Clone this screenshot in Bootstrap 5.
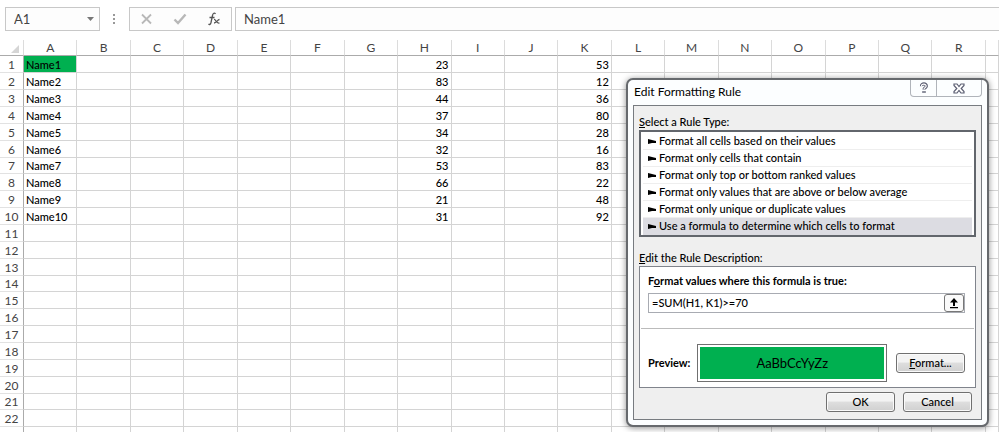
<!DOCTYPE html>
<html lang="en">
<head>
<meta charset="utf-8">
<meta name="viewport" content="width=device-width, initial-scale=1">
<title>Edit Formatting Rule</title>
<link href="https://cdn.jsdelivr.net/npm/bootstrap@5.3.0/dist/css/bootstrap.min.css" rel="stylesheet">
<style>
body{font-family:Lato,"Open Sans",sans-serif;font-size:11px;line-height:16px;color:#000;background:#fff}
button,input{font:inherit;color:inherit}
.formula-bar{padding:7px 0 0 5px}
.bar-box{height:24px;border:1px solid #c8c8c8;background:#fdfdfd;color:#444}
.name-box{width:95px}
.bar-input{border:0;background:transparent;font-size:13px;color:#444;outline:0;min-width:0}
.bar-btn{border:0;background:transparent;padding:0;display:flex}
.dots{width:29px}
.fx-box{width:103px;padding:0 10px;margin-right:3px}
.cells{table-layout:fixed;width:100%;border-collapse:separate;border-spacing:0;margin-top:9px;font-weight:500}
.cells .row-col{width:24px}
.cells .last-col{width:13px}
.cells th{font-weight:400;text-align:center;padding:0;color:#444;font-size:12px}
.cells thead th{height:16px;line-height:14px;border-right:1px solid #dcdcdc;border-bottom:1px solid #ababab}
.cells tbody th{border-right:1px solid #ababab;border-bottom:1px solid #e2e2e2}
.cells td{padding:0 2px;border-right:1px solid #d4d4d4;border-bottom:1px solid #d4d4d4}
.cells tbody tr{height:17px;line-height:15px}
.cells tbody tr:nth-child(7n){height:16px}
.cells thead th:first-child{vertical-align:bottom}
.cells .hit{background:#00b050}
.dialog-frame{top:78px;right:10px;width:363px;padding:0 5px 5px;background:#fcfeff;border:2px solid #66696d;border-radius:7px;box-shadow:0 1px 6px rgba(0,0,0,.45)}
.title-row{height:25px}
.dialog-title{font-size:12px;line-height:16px;font-weight:400;margin:4px 0 0 1px}
.caption-btns{height:17px;border:1px solid #b0b4ba;border-top:0;border-radius:0 0 4px 4px}
.caption-btns button{border:0;background:transparent;padding:0;width:44px;display:flex;align-items:center;justify-content:center}
.caption-btns .help-btn{width:26px;border-right:1px solid #b0b4ba}
.panel{background:#efefef;border:1px solid #777b80;padding:8px 5px 7px}
.section-label{display:block;line-height:16px;font-weight:500}
.rule-list{border:2px solid #62666c;background:#fff;padding:1px 2px 0;margin:0 0 13px;font-weight:500}
.rule-list button{display:flex;align-items:center;gap:3px;width:100%;height:17px;padding:0 5px;border:0;border-bottom:1px solid #eee;background:#fff;line-height:16px;text-align:left}
.rule-list .chosen{background:#dcdce2;border-color:#dcdce2}
.desc-box{border:1px solid #80848c;background:#fff;padding:6px 1px 5px;margin-bottom:4px}
.desc-inner{padding:0 9px 0 7px}
.formula-field{border:1px solid #a8abb2;height:20px;margin-top:4px}
.formula-field input{border:0;outline:0;padding:0 3px;min-width:0;font-weight:500}
.pick-btn{width:20px;margin:0;padding:0;background:#fafafa;border:1px solid #777;border-radius:3px}
.divider{margin:15px 0;border-top:1px solid #bbb}
.preview-frame{border:1px solid #707070;padding:2px;height:38px;margin:0 9px 0 7px}
.preview-swatch{background:#00b050;font-size:13px}
.win-btn{width:69px;height:20px;padding:0;line-height:16px;border:1px solid #707070;border-radius:3px;background:linear-gradient(#f3f3f3 45%,#dedede 50%,#d0d0d0);box-shadow:inset 0 0 0 1px #fafafa;font-weight:500}
</style>
<script src="https://cdn.jsdelivr.net/npm/bootstrap@5.3.0/dist/js/bootstrap.bundle.min.js"></script>
</head>
<body>
<main class="position-relative overflow-hidden vh-100">
  <div class="formula-bar d-flex">
    <div class="bar-box name-box d-flex align-items-center">
      <input class="bar-input w-100 ps-1 ms-1" aria-label="Name box" value="A1">
      <button class="bar-btn me-1" aria-label="Choose a name"><svg width="9" height="6"><path d="M1 1h7L4.500 5z" fill="#777"/></svg></button>
    </div>
    <div class="dots d-flex align-items-center justify-content-center"><svg width="3" height="12" fill="#999"><path d="M0 1h2v2H0zM0 5h2v2H0zM0 9h2v2H0z"/></svg></div>
    <div class="bar-box fx-box d-flex align-items-center justify-content-between">
      <button class="bar-btn" aria-label="Cancel entry"><svg width="13" height="12" fill="none" stroke="#b8b8b8" stroke-width="1.800"><path d="M2 1.500l9 9M11 1.500l-9 9"/></svg></button>
      <button class="bar-btn" aria-label="Enter"><svg width="14" height="12" fill="none" stroke="#b8b8b8" stroke-width="2.400"><path d="M1.500 6.500L5 10l7.500-8.500"/></svg></button>
      <button class="bar-btn" aria-label="Insert function"><svg width="14" height="16" fill="none" stroke="#555" stroke-width="1.300"><path d="M8.500 3C7.500 1.500 6 2 5.500 4.500L4 11.500C3.500 13.500 2.500 14 1.500 13M2.500 6.500h5"/><path d="M7 8.500c2-.5 2 4.500 5.500 3.500M12.500 8.500c-2 0-3 3.500-5.500 3.500"/></svg></button>
    </div>
    <div class="bar-box flex-grow-1 d-flex border-end-0"><input class="bar-input w-100 ps-1 ms-1" aria-label="Formula bar" value="Name1"></div>
  </div>
  <table class="cells">
    <colgroup><col class="row-col"><col span="18"><col class="last-col"></colgroup>
    <thead><tr id="letters"><th aria-label="Select all"><svg class="d-block ms-auto me-1" width="9" height="12"><path d="M9 2v8H1z" fill="#d5d5d5"/></svg></th></tr></thead>
    <tbody id="grid"></tbody>
  </table>

  <section class="dialog-frame position-absolute" role="dialog" aria-labelledby="dlg-title">
    <div class="title-row d-flex justify-content-between align-items-start">
      <h1 class="dialog-title" id="dlg-title">Edit Formatting Rule</h1>
      <div class="caption-btns d-flex">
        <button class="help-btn" aria-label="Help"><svg width="10" height="12" fill="none"><path d="M2.500 4.200C2.300 1.200 7.600 1.200 7.300 4.200 7.100 5.800 5 5.800 5 7.600M5 9v2" stroke="#5b5e72" stroke-width="3.200"/><path d="M2.500 3.900C2.500 1.400 7.400 1.500 7.200 4.200 7 5.800 5 5.800 5 7.200M5 9.500v1" stroke="#fff" stroke-width="1.200"/></svg></button>
        <button aria-label="Close"><svg width="12" height="11" fill="#fff" stroke="#5b5e72" stroke-width="1.200"><path d="M1 1h3l2 2.500L8 1h3v1.500L8.200 5.500 11 8.500V10H8L6 7.500 4 10H1V8.500l2.800-3L1 2.500z"/></svg></button>
      </div>
    </div>
    <div class="panel">
      <div class="section-label" id="types"><u>S</u>elect a Rule Type:</div>
      <div class="rule-list" id="rules" role="listbox" aria-labelledby="types"></div>
      <div class="section-label"><u>E</u>dit the Rule Description:</div>
      <div class="desc-box">
        <div class="desc-inner">
          <label class="section-label fw-bold" for="formula">F<u>o</u>rmat values where this formula is true:</label>
          <div class="formula-field d-flex">
            <input id="formula" class="flex-grow-1" value="=SUM(H1, K1)&gt;=70">
            <button class="pick-btn d-flex align-items-center justify-content-center" aria-label="Collapse dialog"><svg width="10" height="11"><path d="M5 0l4 4.500H6V8H4V4.500H1zM1 9h8v1.300H1z"/></svg></button>
          </div>
        </div>
        <div class="divider"></div>
        <div class="desc-inner d-flex align-items-center">
          <span class="fw-bold">Preview:</span>
          <div class="preview-frame flex-grow-1"><div class="preview-swatch h-100 d-flex align-items-center justify-content-center">AaBbCcYyZz</div></div>
          <button class="win-btn"><u>F</u>ormat...</button>
        </div>
      </div>
      <div class="d-flex justify-content-end gap-2 pe-1"><button class="win-btn">OK</button><button class="win-btn">Cancel</button></div>
    </div>
  </section>
</main>
<script>
const letters = [...'ABCDEFGHIJKLMNOPQR', ''];
const h = [23,83,44,37,34,32,53,66,21,31];
const k = [53,12,36,80,28,16,83,22,48,92];
document.getElementById('letters').insertAdjacentHTML('beforeend', letters.map(l => `<th>${l}</th>`).join(''));
let rows = '';
for (let r = 1; r <= 23; r++) {
  rows += `<tr><th>${r <= 22 ? r : ''}</th>` + letters.map(l => {
    if (r > 10) return '<td></td>';
    if (l === 'A') return `<td${r === 1 ? ' class="hit"' : ''}>Name${r}</td>`;
    if (l === 'H') return `<td class="text-end">${h[r-1]}</td>`;
    if (l === 'K') return `<td class="text-end">${k[r-1]}</td>`;
    return '<td></td>';
  }).join('') + '</tr>';
}
document.getElementById('grid').innerHTML = rows;
const rules = ['Format all cells based on their values','Format only cells that contain','Format only top or bottom ranked values','Format only values that are above or below average','Format only unique or duplicate values','Use a formula to determine which cells to format'];
document.getElementById('rules').innerHTML = rules.map((t, i) => `<button role="option" aria-selected="${i === 5}"${i === 5 ? ' class="chosen"' : ''}><svg width="8" height="7"><path d="M0 1l8 2v2H4L0 6z"/></svg>${t}</button>`).join('');
</script>
</body>
</html>
